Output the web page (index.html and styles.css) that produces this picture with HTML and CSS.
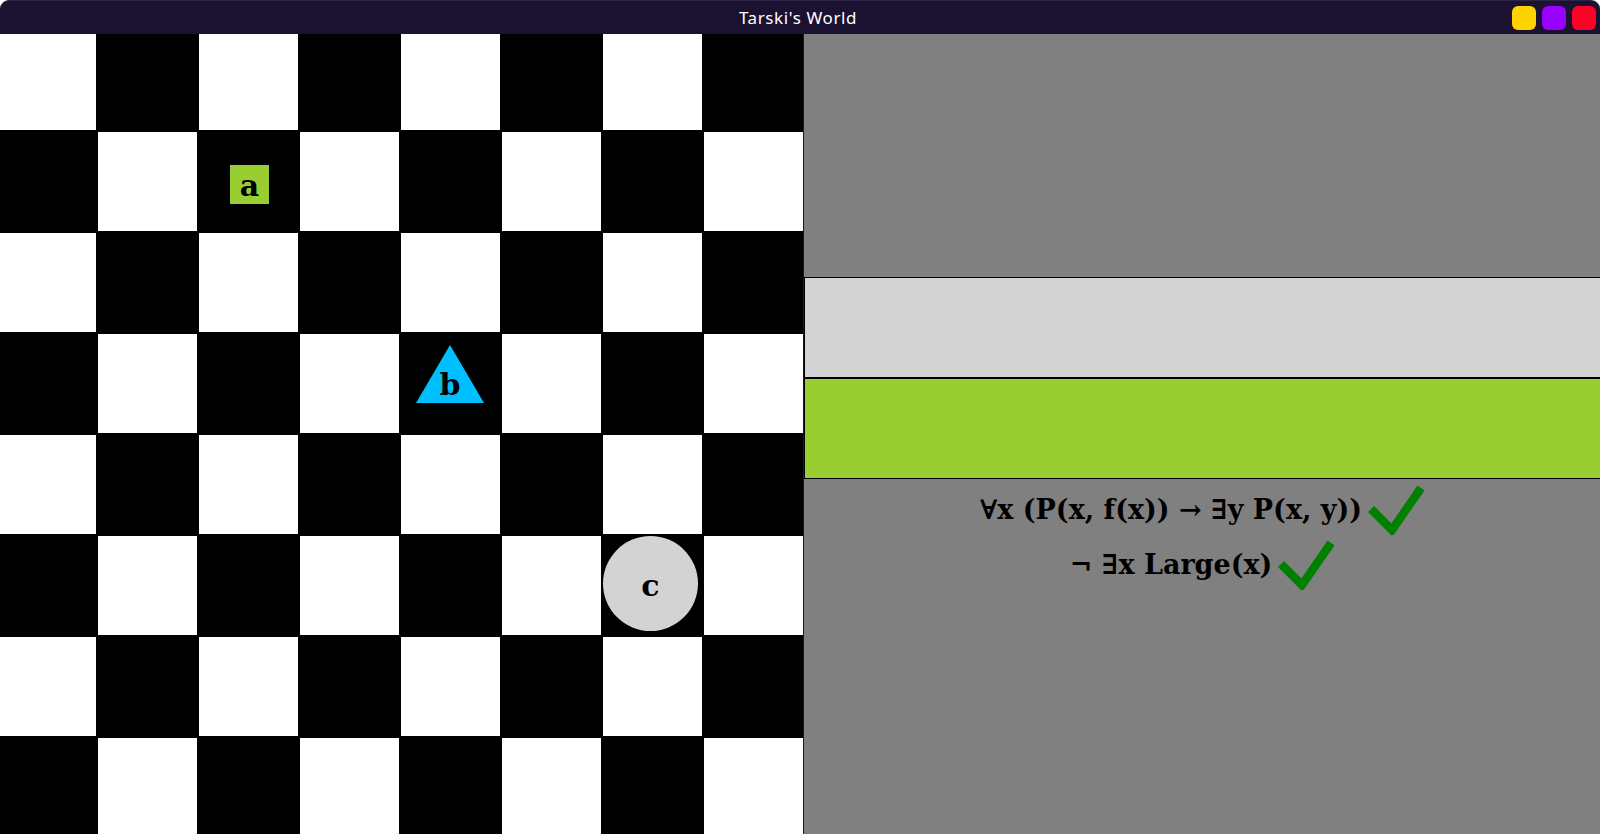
FILE: index.html
```html
<!DOCTYPE html>
<html>
<head>
<meta charset="utf-8">
<title>Tarski's World</title>
<link rel="stylesheet" href="styles.css">
</head>
<body>
<div class="window">
  <header class="titlebar">
    <div class="spacer"></div>
    <div class="title">Tarski's World</div>
    <div class="controls">
      <span class="btn btn-min"></span>
      <span class="btn btn-max"></span>
      <span class="btn btn-close"></span>
    </div>
  </header>
  <main class="main">
    <section class="board">
      <div class="grid">
        <div class="cell w"></div><div class="cell k"></div><div class="cell w"></div><div class="cell k"></div><div class="cell w"></div><div class="cell k"></div><div class="cell w"></div><div class="cell k"></div>
        <div class="cell k"></div><div class="cell w"></div><div class="cell k"><div class="piece square"><span>a</span></div></div><div class="cell w"></div><div class="cell k"></div><div class="cell w"></div><div class="cell k"></div><div class="cell w"></div>
        <div class="cell w"></div><div class="cell k"></div><div class="cell w"></div><div class="cell k"></div><div class="cell w"></div><div class="cell k"></div><div class="cell w"></div><div class="cell k"></div>
        <div class="cell k"></div><div class="cell w"></div><div class="cell k"></div><div class="cell w"></div><div class="cell k"><div class="piece tri"><svg class="tri-shape" width="68" height="58" viewBox="0 0 68 58"><polygon points="34,0 68,58 0,58" fill="#00bfff"/></svg><span>b</span></div></div><div class="cell w"></div><div class="cell k"></div><div class="cell w"></div>
        <div class="cell w"></div><div class="cell k"></div><div class="cell w"></div><div class="cell k"></div><div class="cell w"></div><div class="cell k"></div><div class="cell w"></div><div class="cell k"></div>
        <div class="cell k"></div><div class="cell w"></div><div class="cell k"></div><div class="cell w"></div><div class="cell k"></div><div class="cell w"></div><div class="cell k"><div class="piece circle"><span>c</span></div></div><div class="cell w"></div>
        <div class="cell w"></div><div class="cell k"></div><div class="cell w"></div><div class="cell k"></div><div class="cell w"></div><div class="cell k"></div><div class="cell w"></div><div class="cell k"></div>
        <div class="cell k"></div><div class="cell w"></div><div class="cell k"></div><div class="cell w"></div><div class="cell k"></div><div class="cell w"></div><div class="cell k"></div><div class="cell w"></div>
      </div>
    </section>
    <section class="panel">
      <div class="top-area"></div>
      <div class="band band-gray"></div>
      <div class="band band-green"></div>
      <div class="formulas">
        <div class="formula">
          <span class="ftext">∀x (P(x, f(x)) → ∃y P(x, y))</span>
          <svg class="check" width="56" height="50" viewBox="0 0 56 50"><polyline points="3,24 24,45 53,3" fill="none" stroke="#008000" stroke-width="8.5"/></svg>
        </div>
        <div class="formula">
          <span class="ftext">¬ ∃x Large(x)</span>
          <svg class="check" width="56" height="50" viewBox="0 0 56 50"><polyline points="3,24 24,45 53,3" fill="none" stroke="#008000" stroke-width="8.5"/></svg>
        </div>
      </div>
    </section>
  </main>
</div>
</body>
</html>
```

FILE: styles.css
```css
* { box-sizing: border-box; }
html, body {
  margin: 0;
  padding: 0;
  background: #ffffff;
  overflow: hidden;
}
.window {
  width: 1600px;
  height: 834px;
  display: flex;
  flex-direction: column;
}
.titlebar {
  height: 34px;
  flex: 0 0 34px;
  background: #1b1130;
  border-top: 1px solid #2e2444;
  border-radius: 9px 9px 0 0;
  display: grid;
  grid-template-columns: 1fr auto 1fr;
  align-items: center;
  padding-right: 4px;
}
.title {
  color: #ffffff;
  font-family: "Noto Sans", "DejaVu Sans", sans-serif;
  font-size: 17px;
  letter-spacing: 0.6px;
  margin-top: -1px;
}
.controls {
  display: flex;
  justify-content: flex-end;
  gap: 6px;
}
.btn {
  width: 24px;
  height: 24px;
  border-radius: 6px;
  display: block;
}
.btn-min { background: #ffd300; }
.btn-max { background: #9a00ff; }
.btn-close { background: #ff0026; }

.main {
  flex: 1;
  display: flex;
  min-height: 0;
}
.board {
  width: 804px;
  flex: 0 0 804px;
  height: 800px;
  background: #000000;
  overflow: hidden;
}
.grid {
  display: grid;
  grid-template-columns: repeat(8, 99px);
  grid-auto-rows: 99px;
  gap: 2px;
  margin: -3px 0 0 -3px;
  width: 808px;
}
.cell { position: relative; }
.cell.w { background: #ffffff; }
.cell.k { background: #000000; }

.piece {
  position: absolute;
  display: flex;
  align-items: center;
  justify-content: center;
  font-family: "DejaVu Serif", serif;
  font-weight: bold;
  font-size: 30px;
  color: #000000;
  line-height: 1;
}
.square {
  left: 31px;
  top: 33px;
  width: 39px;
  height: 39px;
  background: #9acd32;
}
.square span { margin-top: 2px; }
.tri {
  left: 15px;
  top: 11px;
  width: 68px;
  height: 58px;
}
.tri-shape {
  position: absolute;
  left: 0;
  top: 0;
}
.tri span {
  position: relative;
  margin-top: 22px;
}
.circle {
  left: 0;
  top: 0;
  width: 95px;
  height: 95px;
  border-radius: 50%;
  background: #d3d3d3;
}
.circle span { margin-top: 5px; }

.panel {
  flex: 1;
  background: #808080;
  display: flex;
  flex-direction: column;
  border-left: 1px solid #1a1a1a;
  margin-left: -1px;
}
.top-area { height: 243px; flex: 0 0 243px; }
.band {
  height: 101px;
  flex: 0 0 101px;
  border: 1px solid #000000;
  border-right: none;
}
.band-gray { background: #d3d3d3; }
.band-green { background: #9acd32; }
.formulas {
  padding-top: 3px;
  display: flex;
  flex-direction: column;
}
.formula {
  height: 55px;
  display: flex;
  align-items: center;
  justify-content: center;
  gap: 6px;
}
.ftext {
  font-family: "DejaVu Serif", serif;
  font-weight: bold;
  font-size: 27px;
  color: #000000;
}
.check { display: block; }
```
